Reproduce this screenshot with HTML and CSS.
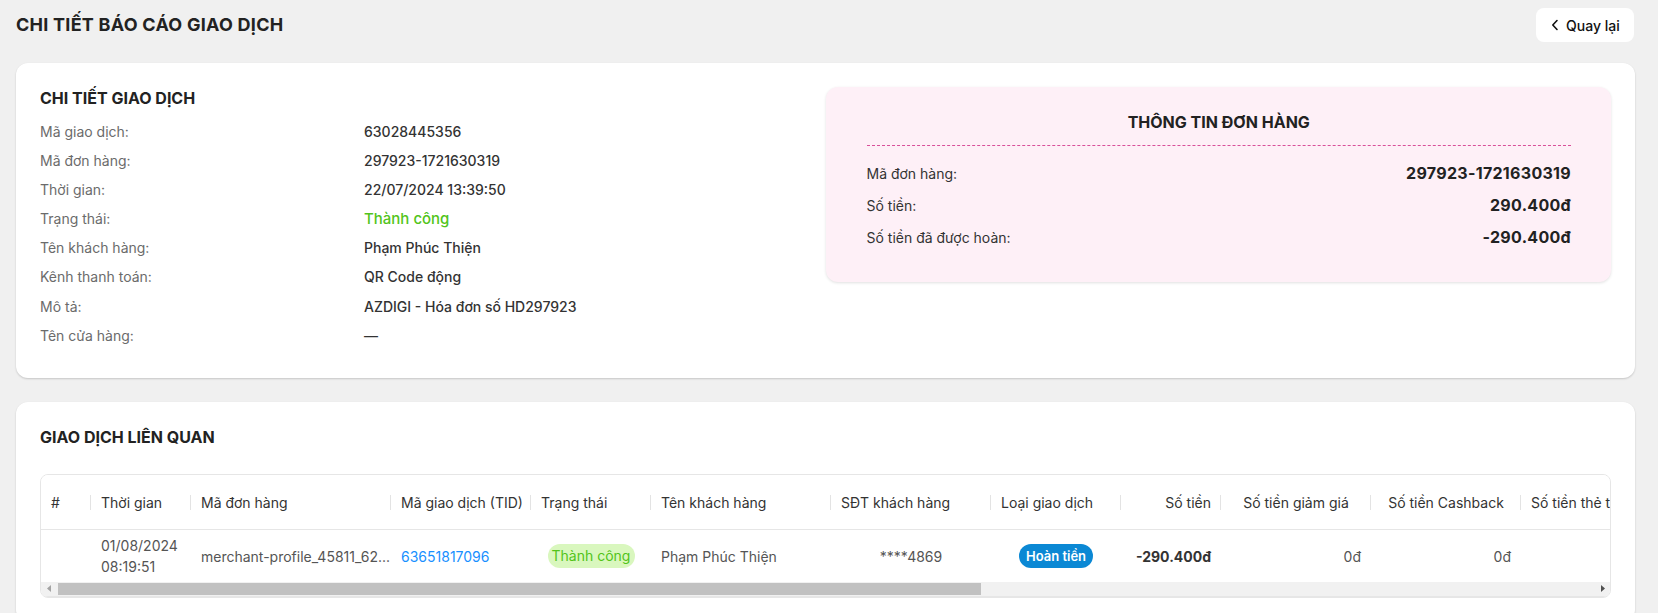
FILE: index.html
```html
<!DOCTYPE html>
<html lang="vi">
<head>
<meta charset="utf-8">
<title>Chi tiết báo cáo giao dịch</title>
<link rel="stylesheet" href="styles.css">
</head>
<body>
<div class="page">
  <header class="page-head">
    <h1 class="page-title">CHI TIẾT BÁO CÁO GIAO DỊCH</h1>
    <button class="back-btn" type="button">
      <svg class="back-icon" width="8" height="12" viewBox="0 0 8 12"><polyline points="6,1.5 1.8,6 6,10.5" fill="none" stroke="#111" stroke-width="1.6" stroke-linecap="round" stroke-linejoin="round"/></svg>
      <span>Quay lại</span>
    </button>
  </header>

  <section class="card detail-card">
    <div class="detail-col">
      <h2 class="section-title">CHI TIẾT GIAO DỊCH</h2>
      <dl class="info-list">
        <dt>Mã giao dịch:</dt><dd>63028445356</dd>
        <dt>Mã đơn hàng:</dt><dd>297923-1721630319</dd>
        <dt>Thời gian:</dt><dd>22/07/2024 13:39:50</dd>
        <dt>Trạng thái:</dt><dd class="status-ok">Thành công</dd>
        <dt>Tên khách hàng:</dt><dd>Phạm Phúc Thiện</dd>
        <dt>Kênh thanh toán:</dt><dd>QR Code động</dd>
        <dt>Mô tả:</dt><dd>AZDIGI - Hóa đơn số HD297923</dd>
        <dt>Tên cửa hàng:</dt><dd>—</dd>
      </dl>
    </div>
    <div class="order-col">
      <div class="order-box">
        <h3 class="order-title">THÔNG TIN ĐƠN HÀNG</h3>
        <div class="order-rows">
          <div class="order-row"><span class="order-label">Mã đơn hàng:</span><span class="order-value">297923-1721630319</span></div>
          <div class="order-row"><span class="order-label">Số tiền:</span><span class="order-value">290.400đ</span></div>
          <div class="order-row"><span class="order-label">Số tiền đã được hoàn:</span><span class="order-value">-290.400đ</span></div>
        </div>
      </div>
    </div>
  </section>

  <section class="card related-card">
    <h2 class="section-title">GIAO DỊCH LIÊN QUAN</h2>
    <div class="table-wrap">
      <div class="table-scroll">
        <table class="tx-table">
          <colgroup>
            <col class="c50"><col class="c100"><col class="c200"><col class="c140"><col class="c120"><col class="c180"><col class="c160"><col class="c130"><col class="c100"><col class="c150"><col class="c150"><col class="c180"><col class="c150"><col class="c150"><col class="c160"><col class="c150">
          </colgroup>
          <thead>
            <tr>
              <th>#</th>
              <th>Thời gian</th>
              <th>Mã đơn hàng</th>
              <th>Mã giao dịch (TID)</th>
              <th>Trạng thái</th>
              <th>Tên khách hàng</th>
              <th>SĐT khách hàng</th>
              <th>Loại giao dịch</th>
              <th class="right">Số tiền</th>
              <th class="center">Số tiền giảm giá</th>
              <th class="center">Số tiền Cashback</th>
              <th>Số tiền thẻ tín dụng</th>
              <th>Phí giao dịch</th>
              <th>Kênh thanh toán</th>
              <th>Tên cửa hàng</th>
              <th>Mô tả</th>
            </tr>
          </thead>
          <tbody>
            <tr>
              <td></td>
              <td>01/08/2024 08:19:51</td>
              <td class="nowrap">merchant-profile_45811_62...</td>
              <td><a class="tid" href="#">63651817096</a></td>
              <td class="center"><span class="badge badge-ok">Thành công</span></td>
              <td>Phạm Phúc Thiện</td>
              <td class="center">****4869</td>
              <td class="center"><span class="badge badge-refund">Hoàn tiền</span></td>
              <td class="right strong">-290.400đ</td>
              <td class="right">0đ</td>
              <td class="right">0đ</td>
              <td class="right">0đ</td>
              <td class="right">0đ</td>
              <td>QR Code động</td>
              <td>—</td>
              <td>AZDIGI</td>
            </tr>
          </tbody>
        </table>
      </div>
      <div class="hscroll">
        <span class="hs-arrow">
          <svg width="4" height="7" viewBox="0 0 4 7"><polygon points="4,0 0,3.5 4,7" fill="#a3a3a3"/></svg>
        </span>
        <div class="hs-track"><div class="hs-thumb"></div></div>
        <span class="hs-arrow">
          <svg width="4" height="7" viewBox="0 0 4 7"><polygon points="0,0 4,3.5 0,7" fill="#505050"/></svg>
        </span>
      </div>
    </div>
  </section>
</div>
</body>
</html>
```

FILE: styles.css
```css
* { box-sizing: border-box; }

html, body {
  margin: 0;
  padding: 0;
  background: #f0f0f0;
  font-family: Inter, "Noto Sans", "Liberation Sans", sans-serif;
  color: #333;
  font-size: 14px;
}

.page {
  padding: 8px 23px 0 16px;
}

.page-head {
  display: flex;
  align-items: center;
  justify-content: space-between;
  height: 34px;
  margin-bottom: 21px;
}

.page-title {
  margin: 0;
  font-size: 18px;
  font-weight: 700;
  color: #222;
  line-height: 22px;
  letter-spacing: 0.25px;
}

.back-btn {
  display: flex;
  align-items: center;
  gap: 7px;
  height: 34px;
  width: 98px;
  margin-right: 1px;
  padding: 0 0 0 15px;
  border: none;
  border-radius: 8px;
  background: #fff;
  font-family: inherit;
  font-size: 14px;
  font-weight: 500;
  color: #111;
  cursor: pointer;
}

.back-icon { display: block; }

.card {
  background: #fff;
  border-radius: 12px;
  box-shadow: 0 1px 2px rgba(0, 0, 0, 0.18);
  padding: 24px;
}

.detail-card {
  display: grid;
  grid-template-columns: 1fr 1fr;
  align-items: start;
  padding-bottom: 28px;
  margin-bottom: 24px;
}

.section-title {
  margin: 0;
  font-size: 16px;
  font-weight: 700;
  line-height: 22px;
  color: #222;
}

.info-list {
  display: grid;
  grid-template-columns: 324px 1fr;
  margin: 8px 0 0;
}

.info-list dt,
.info-list dd {
  margin: 0;
  line-height: 29.1px;
  height: 29.1px;
}

.info-list dt {
  color: #6b6b6b;
}

.info-list dd {
  color: #333;
  font-weight: 500;
}

.info-list dd.status-ok {
  color: #52c41a;
  font-size: 15px;
}

.order-box {
  background: #fef0f7;
  border-radius: 12px;
  box-shadow: 0 1px 3px rgba(0, 0, 0, 0.12);
  padding: 24px 40px 29px 41px;
}

.order-title {
  margin: 0;
  text-align: center;
  font-size: 16px;
  font-weight: 700;
  line-height: 22px;
  color: #222;
  padding-bottom: 12px;
  border-bottom: 1px dashed #d9509a;
}

.order-rows {
  padding-top: 11px;
}

.order-row {
  display: flex;
  justify-content: space-between;
  align-items: center;
  height: 32px;
}

.order-label {
  color: #333;
  font-size: 14px;
}

.order-value {
  font-size: 16px;
  font-weight: 700;
  color: #222;
  letter-spacing: 0.3px;
}

.related-card {
  padding-bottom: 24px;
}

.related-card .section-title {
  margin-bottom: 26px;
}

.table-wrap {
  border: 1px solid #e6e6e6;
  border-radius: 8px;
  overflow: hidden;
}

.table-scroll {
  overflow: hidden;
}

.tx-table {
  table-layout: fixed;
  border-collapse: collapse;
  width: 2270px;
}

.c50 { width: 50px; }
.c100 { width: 100px; }
.c120 { width: 120px; }
.c130 { width: 130px; }
.c140 { width: 140px; }
.c150 { width: 150px; }
.c160 { width: 160px; }
.c180 { width: 180px; }
.c200 { width: 200px; }

.tx-table th {
  height: 55px;
  padding: 0 10px;
  text-align: left;
  font-weight: 400;
  color: #333;
  white-space: nowrap;
  overflow: hidden;
  border-bottom: 1px solid #e6e6e6;
  background: #fff linear-gradient(#e3e3e3, #e3e3e3) right center / 1px 15px no-repeat;
}

.tx-table th:last-child {
  background-image: none;
}

.tx-table td {
  height: 52px;
  padding: 0 10px;
  color: #555;
  line-height: 21px;
  vertical-align: middle;
}

.tx-table .right { text-align: right; }
.tx-table .center { text-align: center; }
.tx-table .nowrap { white-space: nowrap; overflow: hidden; }
.tx-table td.strong { font-weight: 700; color: #333; }

.tid {
  color: #1890ff;
  text-decoration: none;
}

.badge {
  display: inline-block;
  height: 24px;
  line-height: 24px;
  border-radius: 12px;
  padding: 0 10px;
  white-space: nowrap;
}

.badge-ok {
  background: #d9f7be;
  color: #52c41a;
  width: 87px;
  text-align: center;
  padding: 0;
}

.badge-refund {
  background: #0b88d4;
  color: #fff;
  font-weight: 600;
  font-size: 13px;
  width: 74px;
  text-align: center;
  padding: 0;
}

.hscroll {
  display: flex;
  align-items: stretch;
  height: 15px;
  background: #f1f1f1;
  border-bottom: 1px solid #e6e6e6;
}

.hs-arrow {
  width: 15px;
  display: flex;
  align-items: center;
  justify-content: center;
}

.hs-track {
  flex: 1;
  padding: 1px 2px;
}

.hs-thumb {
  width: 923px;
  height: 100%;
  background: #c1c1c1;
}
```
